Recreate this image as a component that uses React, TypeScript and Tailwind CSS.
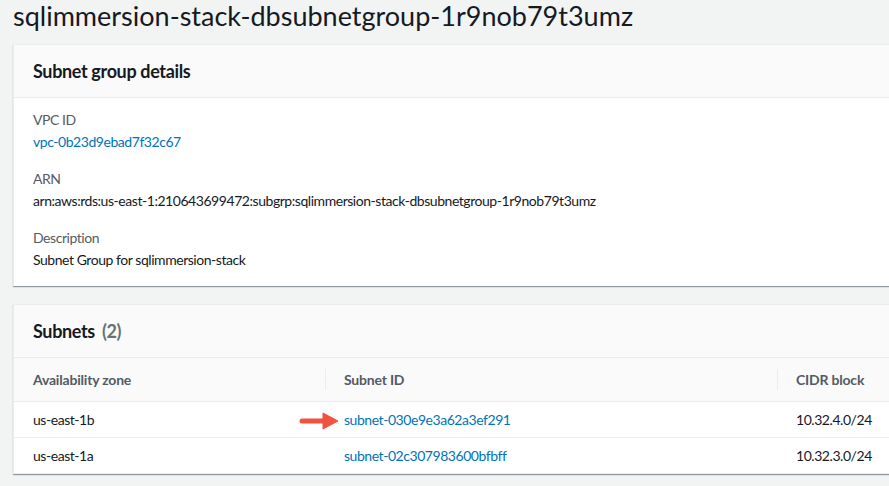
const rows = [
  { az: "us-east-1b", subnet: "subnet-030e9e3a62a3ef291", cidr: "10.32.4.0/24", marked: true },
  { az: "us-east-1a", subnet: "subnet-02c307983600bfbff", cidr: "10.32.3.0/24", marked: false },
];

const Arrow = () => (
  <svg width="42" height="18" viewBox="0 0 42 18" className="absolute left-[-45px] top-[2px]">
    <path d="M3 9 H26" stroke="#f0533f" strokeWidth="5" strokeLinecap="round" />
    <path d="M24 1 L39 9 L24 17 Z" fill="#f0533f" stroke="#f0533f" strokeWidth="1" strokeLinejoin="round" />
  </svg>
);

const Field = ({ label, children }: { label: string; children: React.ReactNode }) => (
  <div className="flex flex-col gap-[2px] tracking-[-0.45px]">
    <div className="text-[14px] leading-[20px] text-[#545b64]">{label}</div>
    <div className="text-[14px] leading-[20px]">{children}</div>
  </div>
);

export default function App() {
  return (
    <div className="w-[889px] h-[486px] overflow-hidden bg-[#f2f3f3] text-[#16191f] font-['Lato','Liberation_Sans',sans-serif]">
      <div className="pl-[13px]">
        <h1 className="text-[27px] leading-[32px] h-[44px] text-[#16191f]">
          sqlimmersion-stack-dbsubnetgroup-1r9nob79t3umz
        </h1>

        <section className="w-[900px] bg-white border-l border-t border-[#eaeded] shadow-[0_1px_1px_0_rgba(0,28,36,0.3),1px_1px_1px_0_rgba(0,28,36,0.15)]">
          <div className="h-[53px] bg-[#fafafa] border-b border-[#eaeded] flex items-center px-[19px]">
            <h2 className="text-[18px] leading-[22px] font-bold tracking-[-0.35px]">Subnet group details</h2>
          </div>
          <div className="px-[19px] pt-[12px] pb-[16px] flex flex-col gap-[17px]">
            <Field label="VPC ID">
              <span className="text-[#0073bb]">vpc-0b23d9ebad7f32c67</span>
            </Field>
            <Field label="ARN">
              arn:aws:rds:us-east-1:210643699472:subgrp:sqlimmersion-stack-dbsubnetgroup-1r9nob79t3umz
            </Field>
            <Field label="Description">Subnet Group for sqlimmersion-stack</Field>
          </div>
        </section>

        <section className="mt-[18px] w-[900px] bg-white border-l border-t border-[#eaeded] shadow-[0_1px_1px_0_rgba(0,28,36,0.3),1px_1px_1px_0_rgba(0,28,36,0.15)]">
          <div className="h-[53px] bg-[#fafafa] border-b border-[#eaeded] flex items-center px-[19px]">
            <h2 className="text-[18px] leading-[22px] font-bold tracking-[-0.35px]">
              Subnets <span className="ml-[3px] text-[#687078]">(2)</span>
            </h2>
          </div>
          <div className="grid grid-cols-[311px_452px_1fr] tracking-[-0.45px]">
            {["Availability zone", "Subnet ID", "CIDR block"].map((h, i) => (
              <div key={h} className="h-[44px] bg-[#fafafa] border-b border-[#eaeded] flex items-center">
                {i > 0 && <div className="w-px h-[21px] bg-[#eaeded]" />}
                <div className={`text-[14px] leading-[20px] font-bold text-[#545b64] tracking-[-0.2px] ${i > 0 ? "pl-[18px]" : "pl-[19px]"}`}>{h}</div>
              </div>
            ))}
            {rows.map((r) => (
              <div key={r.az} className="contents">
                <div className="h-[36px] border-b border-[#eaeded] flex items-center pl-[19px] text-[14px] leading-[20px]">{r.az}</div>
                <div className="h-[36px] border-b border-[#eaeded] flex items-center pl-[19px] text-[14px] leading-[20px] text-[#0073bb]">
                  <span className="relative">
                    {r.marked && <Arrow />}
                    {r.subnet}
                  </span>
                </div>
                <div className="h-[36px] border-b border-[#eaeded] flex items-center pl-[19px] text-[14px] leading-[20px]">{r.cidr}</div>
              </div>
            ))}
          </div>
        </section>
      </div>
    </div>
  );
}
